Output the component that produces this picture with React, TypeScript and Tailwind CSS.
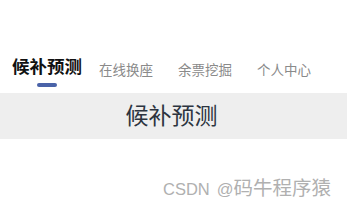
const tabs = ["候补预测", "在线换座", "余票挖掘", "个人中心"];

export default function App() {
  return (
    <div
      className="w-[347px] h-[208px] bg-white overflow-hidden"
      style={{ fontFamily: '"Liberation Sans", "Noto Sans CJK SC", sans-serif' }}
    >
      <div className="flex items-start pt-[55px] pl-[12px] h-[93px]">
        {tabs.map((t, i) =>
          i === 0 ? (
            <div key={t} className="flex flex-col items-center mr-[17px]">
              <span className="text-[17.5px] leading-[25px] font-bold text-[#111]">{t}</span>
              <span className="mt-[3px] w-[20px] h-[4px] rounded-full bg-[#4a63a8]" />
            </div>
          ) : (
            <div key={t} className="mr-[25px] pt-[3px]">
              <span className="text-[13.5px] leading-[20px] text-[#8a8a8a]">{t}</span>
            </div>
          )
        )}
      </div>
      <div className="h-[46px] bg-[#eeeeee] flex items-center justify-center">
        <span className="text-[23px] leading-[30px] text-[#2c3440] -ml-[4px]">候补预测</span>
      </div>
      <div className="flex justify-end items-baseline pr-[16px] pt-[38px] text-[#b0b0b0]">
        <span className="text-[16.5px] leading-[22px]">CSDN</span>
        <span className="text-[16.5px] leading-[22px] ml-[7px]">@</span>
        <span className="text-[19.5px] leading-[22px]">码牛程序猿</span>
      </div>
    </div>
  );
}
